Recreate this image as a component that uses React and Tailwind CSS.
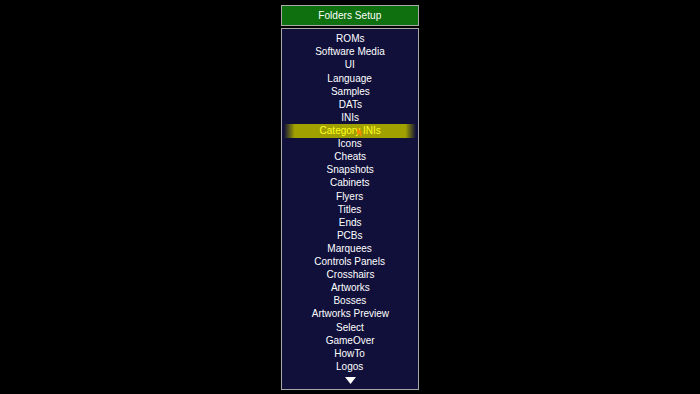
const ITEMS = [
  'ROMs', 'Software Media', 'UI', 'Language', 'Samples', 'DATs', 'INIs',
  'Category INIs', 'Icons', 'Cheats', 'Snapshots', 'Cabinets', 'Flyers',
  'Titles', 'Ends', 'PCBs', 'Marquees', 'Controls Panels', 'Crosshairs',
  'Artworks', 'Bosses', 'Artworks Preview', 'Select', 'GameOver', 'HowTo', 'Logos',
];

const SELECTED = 'Category INIs';

export default function App() {
  return (
    <div
      className="w-[700px] h-[394px] bg-black flex flex-col items-center pt-[5px]"
      style={{ fontFamily: '"Liberation Sans", Arial, sans-serif' }}
    >
      {/* Title */}
      <div className="w-[138px] h-[21px] bg-[#0f700f] border border-[#a8a8a8] flex items-center justify-center text-white text-[11.5px]">
        <span className="inline-block scale-x-[0.88]">Folders Setup</span>
      </div>

      {/* Menu */}
      <div className="mt-[2px] w-[138px] h-[362px] bg-[#10103a] border border-[#a8a8a8] flex flex-col pt-[3.4px]">
        {ITEMS.map(item => {
          const sel = item === SELECTED;
          return (
            <div key={item} className="h-[13.12px] flex items-center justify-center px-[2px]">
              {sel ? (
                <div className="relative w-full h-[14px] flex items-center justify-center bg-[linear-gradient(90deg,rgba(160,160,0,0)_0%,#a0a000_8%,#a0a000_92%,rgba(160,160,0,0)_100%)] text-[#ffff20] text-[11.5px] leading-none">
                  <span className="inline-block scale-x-[0.87] whitespace-nowrap">{item}</span>
                  <svg className="absolute left-[73px] top-[4px]" width="7" height="9" viewBox="0 0 7 9">
                    <path d="M0 0 L0 7 L2 5 L4 8.5 L5 8 L3.5 4.5 L6 4.5 Z" fill="#ff8a00" />
                  </svg>
                </div>
              ) : (
                <span className="inline-block scale-x-[0.87] whitespace-nowrap text-white text-[11.5px] leading-none">{item}</span>
              )}
            </div>
          );
        })}
        <div className="flex justify-center mt-[4px]">
          <svg width="11" height="7" viewBox="0 0 11 7">
            <path d="M0 0 L11 0 L5.5 7 Z" fill="#ffffff" />
          </svg>
        </div>
      </div>
    </div>
  );
}
